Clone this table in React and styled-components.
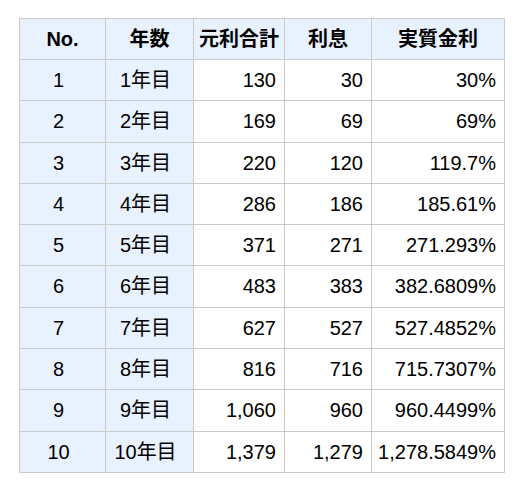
import React from 'react'
import styled, {createGlobalStyle} from 'styled-components'

const GlobalStyle = createGlobalStyle`
    body {
        margin: 0;
        background: #fff;
        font-family: "Liberation Sans", "Noto Sans CJK JP", sans-serif;
        color: #000;
    }
`

const Page = styled.div`
    padding: 18px 0 0 19px;
`

const Table = styled.table`
    border-collapse: collapse;
    table-layout: fixed;
    font-size: 20px;
`

const HeadCell = styled.th`
    background: #e8f2fe;
    border: 1px solid #cbcbcb;
    font-weight: bold;
    text-align: center;
    line-height: 40px;
    padding: 0;
    white-space: nowrap;
`

const Cell = styled.td`
    background: ${props => props.$shaded ? '#e8f2fe' : '#fff'};
    border: 1px solid #cbcbcb;
    text-align: ${props => props.$align || 'right'};
    line-height: 40.3px;
    padding: 0 8px 0 0;
    white-space: nowrap;
`

const columns = [
    {name: 'No.', width: 86},
    {name: '年数', width: 88},
    {name: '元利合計', width: 91},
    {name: '利息', width: 87},
    {name: '実質金利', width: 133}
]

const rows = [
    ['130', '30', '30%'],
    ['169', '69', '69%'],
    ['220', '120', '119.7%'],
    ['286', '186', '185.61%'],
    ['371', '271', '271.293%'],
    ['483', '383', '382.6809%'],
    ['627', '527', '527.4852%'],
    ['816', '716', '715.7307%'],
    ['1,060', '960', '960.4499%'],
    ['1,379', '1,279', '1,278.5849%']
]

export default function App() {
    return (
        <Page>
            <GlobalStyle />
            <Table>
                <colgroup>
                    {columns.map(col => <col key={col.name} style={{width: col.width}} />)}
                </colgroup>
                <thead>
                    <tr>
                        {columns.map(col => <HeadCell key={col.name}>{col.name}</HeadCell>)}
                    </tr>
                </thead>
                <tbody>
                    {rows.map((row, i) => (
                        <tr key={i}>
                            <Cell $shaded $align="center">{i + 1}</Cell>
                            <Cell $shaded $align="center">{i + 1}年目</Cell>
                            {row.map((value, j) => <Cell key={j}>{value}</Cell>)}
                        </tr>
                    ))}
                </tbody>
            </Table>
        </Page>
    )
}
